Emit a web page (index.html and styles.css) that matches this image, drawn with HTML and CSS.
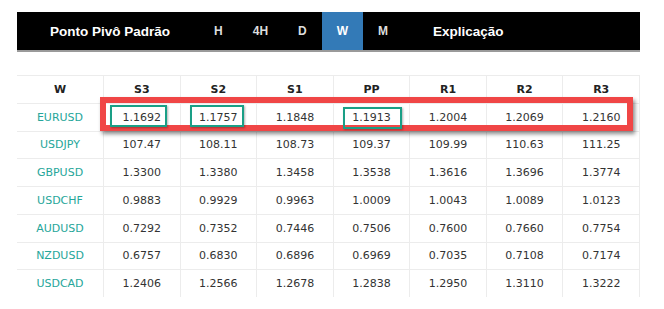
FILE: index.html
```html
<!DOCTYPE html>
<html lang="pt">

<head>
    <meta charset="UTF-8">
    <meta name="viewport" content="width=device-width, initial-scale=1.0">
    <title>Ponto Pivô Padrão</title>
    <link rel="stylesheet" href="styles.css">
</head>

<body>
    <div class="page">
        <div class="topbar">
            <span class="title">Ponto Pivô Padrão</span>
            <div class="tabs">
                <span class="tab">H</span>
                <span class="tab">4H</span>
                <span class="tab">D</span>
                <span class="tab active">W</span>
                <span class="tab">M</span>
            </div>
            <span class="explain">Explicação</span>
        </div>

        <div class="table-wrap">
            <table class="pivots">
                <thead>
                    <tr>
                        <th class="pair-col">W</th>
                        <th>S3</th>
                        <th>S2</th>
                        <th>S1</th>
                        <th>PP</th>
                        <th>R1</th>
                        <th>R2</th>
                        <th>R3</th>
                    </tr>
                </thead>
                <tbody>
                    <tr>
                        <td class="pair">EURUSD</td>
                        <td>1.1692</td><td>1.1757</td><td>1.1848</td><td>1.1913</td><td>1.2004</td><td>1.2069</td><td>1.2160</td>
                    </tr>
                    <tr>
                        <td class="pair">USDJPY</td>
                        <td>107.47</td><td>108.11</td><td>108.73</td><td>109.37</td><td>109.99</td><td>110.63</td><td>111.25</td>
                    </tr>
                    <tr>
                        <td class="pair">GBPUSD</td>
                        <td>1.3300</td><td>1.3380</td><td>1.3458</td><td>1.3538</td><td>1.3616</td><td>1.3696</td><td>1.3774</td>
                    </tr>
                    <tr>
                        <td class="pair">USDCHF</td>
                        <td>0.9883</td><td>0.9929</td><td>0.9963</td><td>1.0009</td><td>1.0043</td><td>1.0089</td><td>1.0123</td>
                    </tr>
                    <tr>
                        <td class="pair">AUDUSD</td>
                        <td>0.7292</td><td>0.7352</td><td>0.7446</td><td>0.7506</td><td>0.7600</td><td>0.7660</td><td>0.7754</td>
                    </tr>
                    <tr>
                        <td class="pair">NZDUSD</td>
                        <td>0.6757</td><td>0.6830</td><td>0.6896</td><td>0.6969</td><td>0.7035</td><td>0.7108</td><td>0.7174</td>
                    </tr>
                    <tr>
                        <td class="pair">USDCAD</td>
                        <td>1.2406</td><td>1.2566</td><td>1.2678</td><td>1.2838</td><td>1.2950</td><td>1.3110</td><td>1.3222</td>
                    </tr>
                </tbody>
            </table>

            <!-- markers drawn over the table -->
            <div class="mark-row"></div>
            <div class="mark-cell s3"></div>
            <div class="mark-cell s2"></div>
            <div class="mark-cell pp"></div>
        </div>
    </div>
</body>

</html>
```

FILE: styles.css
```css
body {
    margin: 0;
    background-color: #ffffff;
}

.page {
    padding: 12px 24px 0 17px;
}

.topbar {
    display: flex;
    align-items: center;
    height: 38px;
    background-color: #000000;
    border-bottom: 2px solid #9a9a9a;
    font-family: 'Liberation Sans', Arial, sans-serif;
    font-weight: bold;
    color: #ffffff;
}

.title {
    font-size: 13.5px;
    margin-left: 33px;
}

.tabs {
    display: flex;
    height: 100%;
    margin-left: 29px;
}

.tab {
    display: flex;
    align-items: center;
    padding: 0 15px;
    font-size: 12px;
    color: #dddddd;
}

.tab.active {
    background-color: #337ab7;
    color: #ffffff;
}

.explain {
    font-size: 13.5px;
    margin-left: 30px;
}

.table-wrap {
    position: relative;
    margin-top: 23px;
    width: 623px;
}

.pivots {
    width: 623px;
    border-collapse: collapse;
    table-layout: fixed;
    font-family: 'DejaVu Sans', Verdana, sans-serif;
    font-size: 11px;
    color: #333333;
}

.pivots th,
.pivots td {
    height: 26.75px;
    padding: 0;
    text-align: center;
    border-top: 1px solid #ececec;
    border-left: 1px solid #ececec;
}

.pivots th:first-child,
.pivots td:first-child {
    border-left: none;
}

.pivots th:last-child,
.pivots td:last-child {
    border-right: 1px solid #ececec;
}

.pivots th {
    font-weight: bold;
    color: #222222;
}

.pair-col {
    width: 86px;
}

.pair {
    color: #26a69a;
}

.mark-row {
    position: absolute;
    left: 83px;
    top: 22px;
    width: 521px;
    height: 22px;
    border: 6px solid #f04646;
    box-shadow: 2px 3px 4px rgba(0, 0, 0, 0.45);
}

.mark-cell {
    position: absolute;
    top: 30px;
    height: 18px;
    border: 2.5px solid #1a9f86;
    box-shadow: 1px 1px 2px rgba(0, 0, 0, 0.3);
}

.mark-cell.s3 {
    left: 93px;
    width: 53px;
}

.mark-cell.s2 {
    left: 173px;
    width: 50px;
}

.mark-cell.pp {
    left: 326px;
    top: 32px;
    width: 55px;
}
```
